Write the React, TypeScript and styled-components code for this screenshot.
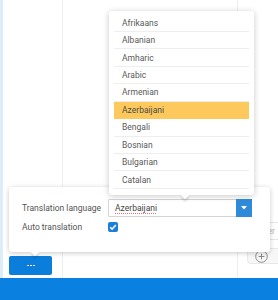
import React from "react";
import styled, { createGlobalStyle } from "styled-components";

const languages = [
  "Afrikaans",
  "Albanian",
  "Amharic",
  "Arabic",
  "Armenian",
  "Azerbaijani",
  "Bengali",
  "Bosnian",
  "Bulgarian",
  "Catalan",
];

const selected = "Azerbaijani";

const App = () => {
  return (
    <>
      <GlobalStyle />
      <Frame>
        <Main>
          <Strip />
          <LeftCol>
            <DotsButton aria-label="more">
              <Dash />
              <Dash />
              <Dash />
            </DotsButton>
          </LeftCol>
          <CenterCol />
          <RightCol>
            <FilterInput placeholder="Filter" />
            <PlusButton>
              <svg width="13" height="13" viewBox="0 0 13 13">
                <circle cx="6.5" cy="6.5" r="5.8" fill="none" stroke="#8a8a8a" strokeWidth="1" />
                <path d="M6.5 3.6v5.8M3.6 6.5h5.8" stroke="#8a8a8a" strokeWidth="1" />
              </svg>
            </PlusButton>
          </RightCol>
        </Main>
        <BottomBar />

        <SettingsPopup>
          <Label>Translation language</Label>
          <Select>
            <SelectValue>{selected}</SelectValue>
            <SelectToggle>
              <svg width="6" height="4" viewBox="0 0 6 4">
                <path d="M0 0h6L3 3.5z" fill="#fff" />
              </svg>
            </SelectToggle>
          </Select>
          <Label>Auto translation</Label>
          <Checkbox>
            <svg width="8" height="8" viewBox="0 0 8 8">
              <path d="M1.2 4.2l1.9 1.9L6.9 2" fill="none" stroke="#fff" strokeWidth="1.5" />
            </svg>
          </Checkbox>
        </SettingsPopup>

        <LanguageList>
          {languages.map((lang) => (
            <LanguageItem key={lang} $active={lang === selected}>
              {lang}
            </LanguageItem>
          ))}
        </LanguageList>
      </Frame>
    </>
  );
};

const GlobalStyle = createGlobalStyle`
  body {
    margin: 0;
    background: #fff;
    font-family: Roboto, "Liberation Sans", sans-serif;
  }
  * {
    box-sizing: border-box;
  }
`;

const Frame = styled.div`
  width: 278px;
  height: 300px;
  position: relative;
  display: flex;
  flex-direction: column;
  overflow: hidden;
  background: #fff;
`;

const Main = styled.div`
  flex: 1;
  display: flex;
`;

const Strip = styled.div`
  width: 3px;
  background: #dcecfb;
`;

const LeftCol = styled.div`
  width: 60px;
  border-right: 1px solid #eeeeee;
  display: flex;
  flex-direction: column;
  justify-content: flex-end;
  padding: 0 0 3px 6px;
`;

const DotsButton = styled.div`
  width: 43px;
  height: 19px;
  border-radius: 2px;
  background: #0b7edb;
  display: flex;
  align-items: center;
  justify-content: center;
  gap: 1px;
  padding-bottom: 1px;
`;

const Dash = styled.span`
  width: 2px;
  height: 1px;
  background: #fff;
`;

const CenterCol = styled.div`
  flex: 1;
  border-right: 1px solid #eeeeee;
`;

const RightCol = styled.div`
  width: 40px;
  display: flex;
  flex-direction: column;
  gap: 8px;
  padding: 222px 0 0 9px;
`;

const FilterInput = styled.input`
  width: 31px;
  height: 18px;
  border: 1px solid #e6e6e6;
  border-right: none;
  border-radius: 2px 0 0 2px;
  font-family: inherit;
  font-size: 8.5px;
  text-align: right;
  padding: 0 3px;
  outline: none;
  &::placeholder {
    color: #b5b5b5;
  }
`;

const PlusButton = styled.div`
  width: 40px;
  height: 16px;
  border: 1px solid #e8e8e8;
  border-radius: 4px;
  background: #f7f7f7;
  display: flex;
  align-items: center;
  padding-left: 7px;
`;

const BottomBar = styled.div`
  height: 22px;
  background: #0a80e0;
`;

const SettingsPopup = styled.div`
  position: absolute;
  left: 9px;
  top: 187px;
  width: 261px;
  height: 65px;
  background: #fff;
  border-radius: 3px;
  box-shadow: 0 1px 5px rgba(0, 0, 0, 0.22);
  display: grid;
  grid-template-columns: 86px 144px;
  grid-template-rows: 18px 14px;
  row-gap: 3px;
  align-items: center;
  padding: 12px 0 0 13px;

  &::after {
    content: "";
    position: absolute;
    left: 23px;
    bottom: -3px;
    width: 6px;
    height: 6px;
    background: #fff;
    transform: rotate(45deg);
    box-shadow: 2px 2px 2px rgba(0, 0, 0, 0.12);
  }
`;

const Label = styled.div`
  font-size: 8.5px;
  color: #555;
  white-space: nowrap;
`;

const Select = styled.div`
  height: 18px;
  display: flex;
  border: 1px solid #d4d4d4;
  border-radius: 1px;
`;

const SelectValue = styled.div`
  flex: 1;
  font-size: 8.5px;
  color: #444;
  display: flex;
  align-items: center;
  padding-left: 6px;
  text-decoration: underline dotted #e87070;
  text-decoration-thickness: 1px;
  text-underline-offset: 2px;
`;

const SelectToggle = styled.div`
  width: 16px;
  margin: -1px -1px -1px 0;
  background: #2f8bd8;
  display: flex;
  align-items: center;
  justify-content: center;
`;

const Checkbox = styled.div`
  width: 10px;
  height: 10px;
  border-radius: 2px;
  background: #1a7fd8;
  display: flex;
  align-items: center;
  justify-content: center;
`;

const LanguageList = styled.div`
  position: absolute;
  left: 109px;
  top: 11px;
  width: 145px;
  height: 184px;
  background: #fff;
  border-radius: 3px;
  box-shadow: 0 1px 6px rgba(0, 0, 0, 0.22);
  padding: 3.5px 5px 0;

  &::after {
    content: "";
    position: absolute;
    left: 73px;
    bottom: -3px;
    width: 6px;
    height: 6px;
    background: #fff;
    transform: rotate(45deg);
    box-shadow: 2px 2px 2px rgba(0, 0, 0, 0.12);
  }
`;

const LanguageItem = styled.div<{ $active: boolean }>`
  height: 17.45px;
  border-bottom: 1px solid ${(p) => (p.$active ? "#fec95c" : "#eeeeee")};
  background: ${(p) => (p.$active ? "#fec95c" : "#fff")};
  font-size: 8.5px;
  color: ${(p) => (p.$active ? "#4a4a4a" : "#5a5a5a")};
  display: flex;
  align-items: center;
  padding-left: 8px;
`;

export default App;
